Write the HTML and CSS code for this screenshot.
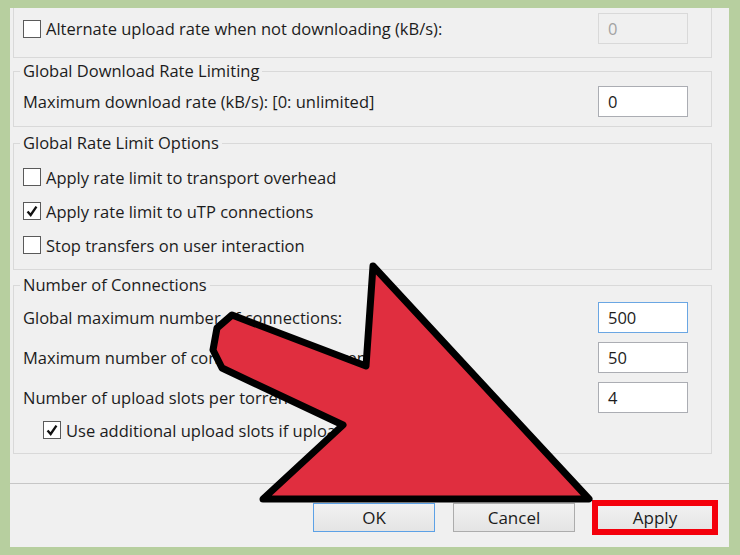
FILE: index.html
```html
<!doctype html>
<html lang="en">
  <head>
    <meta charset="UTF-8" />
    <meta name="viewport" content="width=device-width, initial-scale=1.0" />
    <title>Bandwidth</title>
    <link rel="stylesheet" href="styles.css">
  </head>
  <body>
    <div class="window">
      <div class="settings">
        <!-- scrolled, top edge is out of view -->
        <div class="group group_cut">
          <div class="row">
            <span class="check"><span class="box"></span>Alternate upload rate when not downloading (kB/s):</span>
            <span class="field disabled">0</span>
          </div>
        </div>

        <fieldset class="group group_download">
          <legend>Global Download Rate Limiting</legend>
          <div class="row">
            <span>Maximum download rate (kB/s): [0: unlimited]</span>
            <span class="field">0</span>
          </div>
        </fieldset>

        <fieldset class="group group_options">
          <legend>Global Rate Limit Options</legend>
          <div class="check_row">
            <span class="check"><span class="box"></span>Apply rate limit to transport overhead</span>
          </div>
          <div class="check_row">
            <span class="check">
              <span class="box">
                <svg viewBox="0 0 18 18"><path d="M4 9.5 L7.5 13.5 L14 4" /></svg>
              </span>Apply rate limit to uTP connections</span>
          </div>
          <div class="check_row">
            <span class="check"><span class="box"></span>Stop transfers on user interaction</span>
          </div>
        </fieldset>

        <fieldset class="group group_connections">
          <legend>Number of Connections</legend>
          <div class="row">
            <span>Global maximum number of connections:</span>
            <span class="field focused">500</span>
          </div>
          <div class="row">
            <span>Maximum number of connections per torrent:</span>
            <span class="field">50</span>
          </div>
          <div class="row">
            <span>Number of upload slots per torrent:</span>
            <span class="field">4</span>
          </div>
          <div class="sub_row">
            <span class="check">
              <span class="box">
                <svg viewBox="0 0 18 18"><path d="M4 9.5 L7.5 13.5 L14 4" /></svg>
              </span>Use additional upload slots if upload speed &lt; 90%</span>
          </div>
        </fieldset>
      </div>

      <div class="buttons">
        <button class="btn default">OK</button>
        <button class="btn">Cancel</button>
        <button class="btn highlight">Apply</button>
      </div>
    </div>

    <svg class="arrow" viewBox="0 0 740 555">
      <polygon points="232,315 366,366 373,266 589,499 263,499 343,425 222,368 213,350 217,328" />
    </svg>
  </body>
</html>
```

FILE: styles.css
```css
:root {
  --font-family-base: "Open Sans", "Noto Sans", sans-serif;
  --font-size-base: 16.5px;
  --text-color: #1c1c1c;
  --window-bg: #f0f0f0;
  --frame-bg: #b7cf9f;
  --group-border: #d9d9d9;
  --field-border: #abadb3;
}

html,
body {
  margin: 0;
}
body {
  width: 740px;
  height: 555px;
  box-sizing: border-box;
  padding: 8px 11px 8px 10px;
  overflow: hidden;
  background-color: var(--frame-bg);
  font-family: var(--font-family-base);
  font-size: var(--font-size-base);
  color: var(--text-color);
}

.window {
  height: 100%;
  display: flex;
  flex-direction: column;
  background-color: var(--window-bg);
}
.settings {
  flex: 1;
  padding: 0 17px 0 3px;
}

/* group boxes */
.group {
  margin: 0;
  padding: 0 23px 0 9px;
  border: 1px solid var(--group-border);
  min-width: 0;
}
.group legend {
  padding: 0 3px;
  margin-left: -3px;
  line-height: 20px;
}
.group_cut {
  border-top: none;
  padding-top: 5px;
  padding-bottom: 13px;
}
.group_download {
  margin-top: 3px;
  padding-top: 5px;
  padding-bottom: 9px;
}
.group_options {
  margin-top: 6px;
  padding-top: 7px;
  padding-bottom: 7px;
}
.group_connections {
  margin-top: 5px;
  padding-top: 7px;
  padding-bottom: 14px;
  display: flex;
  flex-direction: column;
  gap: 9px;
}

.row {
  display: flex;
  justify-content: space-between;
  align-items: center;
  height: 31px;
}
.check_row {
  display: flex;
  align-items: center;
  height: 34px;
}
.sub_row {
  display: flex;
  align-items: center;
  height: 18px;
  margin-top: -1px;
  padding-left: 20px;
}

/* checkbox */
.check {
  display: flex;
  align-items: center;
  gap: 5px;
}
.box {
  width: 16px;
  height: 16px;
  border: 1px solid #5a5a5a;
  background-color: #fff;
  display: flex;
}
.box svg {
  width: 16px;
  height: 16px;
}
.box path {
  fill: none;
  stroke: #111;
  stroke-width: 2.6;
}

/* text boxes */
.field {
  box-sizing: border-box;
  width: 90px;
  height: 31px;
  padding: 0 9px;
  display: flex;
  align-items: center;
  background-color: #fff;
  border: 1px solid var(--field-border);
}
.field.disabled {
  background-color: var(--window-bg);
  border-color: #d9d9d9;
  color: #a3a3a3;
}
.field.focused {
  border-color: #6aa6e3;
}

/* bottom buttons */
.buttons {
  box-sizing: border-box;
  height: 64px;
  border-top: 1px solid #c6c6c6;
  display: flex;
  justify-content: flex-end;
  align-items: flex-start;
  gap: 18px;
  padding: 19px 14px 0 0;
}
.btn {
  width: 122px;
  height: 29px;
  font-family: var(--font-family-base);
  font-size: 17px;
  color: var(--text-color);
  background: linear-gradient(#f2f2f2, #e4e4e4);
  border: 1px solid #acacac;
  padding: 0;
}
.btn.default {
  border-color: #5ca1e6;
}
.btn.highlight {
  width: 120px;
  margin-left: 2px;
  outline: 6px solid #f4000c;
  outline-offset: -3px;
}

/* pointer overlay */
.arrow {
  position: absolute;
  top: 0;
  left: 0;
  width: 740px;
  height: 555px;
  pointer-events: none;
}
.arrow polygon {
  fill: #e02e3f;
  stroke: #000;
  stroke-width: 7;
  stroke-linejoin: round;
}
```
